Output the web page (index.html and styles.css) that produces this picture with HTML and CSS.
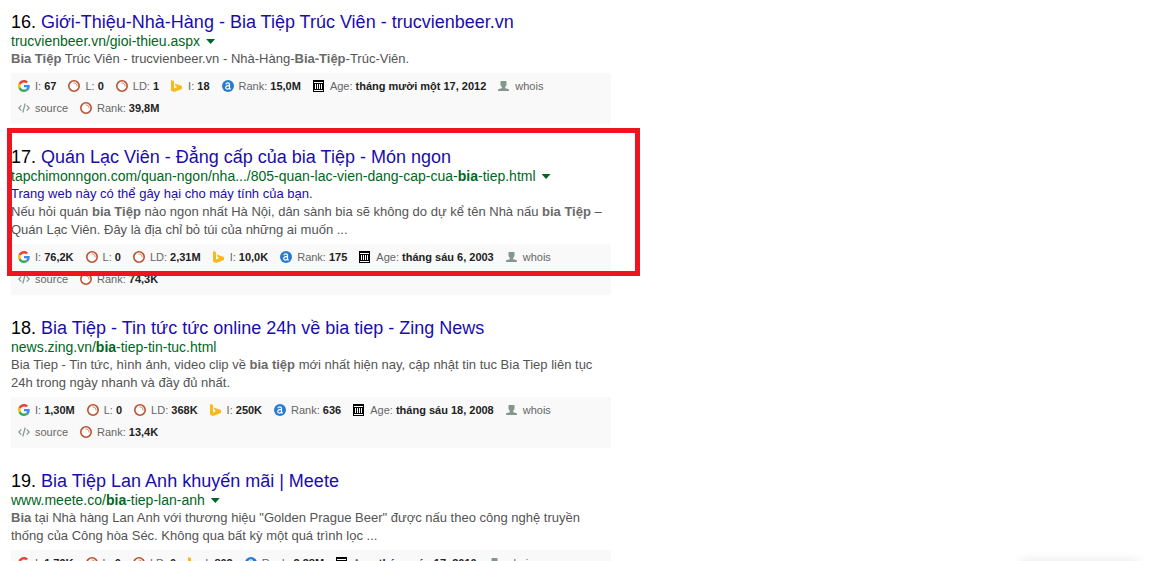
FILE: index.html
```html
<!DOCTYPE html>
<html lang="vi">
<head>
  <meta charset="UTF-8">
  <meta name="viewport" content="width=device-width, initial-scale=1.0">
  <title>bia tiệp</title>
  <link rel="stylesheet" href="styles.css">
</head>
<body>
  <!-- icons -->
  <svg class="sprite" width="0" height="0">
    <symbol id="google" viewBox="0 0 48 48">
      <path fill="#ea4335" d="M24 9.500c3.540 0 6.710 1.220 9.210 3.600l6.850-6.850C35.900 2.380 30.470 0 24 0 14.620 0 6.510 5.380 2.560 13.220l7.980 6.190C12.430 13.720 17.740 9.500 24 9.500z"/>
      <path fill="#4285f4" d="M46.980 24.550c0-1.570-.15-3.090-.38-4.550H24v9.020h12.940c-.58 2.960-2.260 5.480-4.780 7.180l7.730 6c4.510-4.180 7.090-10.360 7.090-17.650z"/>
      <path fill="#fbbc05" d="M10.530 28.590c-.48-1.450-.76-2.990-.76-4.590s.27-3.140.76-4.590l-7.980-6.190C.92 16.460 0 20.120 0 24s.92 7.540 2.560 10.780l7.970-6.190z"/>
      <path fill="#34a853" d="M24 48c6.480 0 11.930-2.130 15.890-5.810l-7.730-6c-2.150 1.450-4.920 2.300-8.160 2.300-6.260 0-11.570-4.220-13.470-9.910l-7.980 6.190C6.510 42.620 14.620 48 24 48z"/>
    </symbol>
    <symbol id="semrush" viewBox="0 0 12 12">
      <circle cx="6" cy="6" r="5.200" fill="#fff" stroke="#b95233" stroke-width="1.600"/>
      <path d="M5.500 3a3 3 0 0 1 3.500 3.500" fill="none" stroke="#d08a72" stroke-width="1"/>
    </symbol>
    <symbol id="bing" viewBox="0 0 12 12">
      <path fill="#f8b81e" d="M0 0l3 1v7.600L6.200 7 4.700 6.200 3.700 3.600 11 6v3L3 12 0 10.600z"/>
    </symbol>
    <symbol id="alexa" viewBox="0 0 12 12">
      <circle cx="6" cy="6" r="6" fill="#2a7bd0"/>
      <path d="M3.800 4.200C4.500 2.300 7.500 2.300 7.500 4.400v3.900c0 .8.800.8 1.300.4M7.500 5.400C5.400 5.500 3.700 6 3.700 7.600c0 2 3 1.900 3.800.1" fill="none" stroke="#fff" stroke-width="1.200"/>
    </symbol>
    <symbol id="archive" viewBox="0 0 12 12">
      <g shape-rendering="crispEdges">
        <path fill="#000" d="M0 0h11v12H0z"/>
        <path fill="#fff" d="M1 2h9v1H1zM2 4h1v5H2zM4 4h1v5H4zM6 4h1v5H6zM8 4h1v5H8zM1 10h9v1H1z"/>
      </g>
    </symbol>
    <symbol id="person" viewBox="0 0 12 12">
      <path fill="#84978d" d="M3.500 1h4c.7 0 1 .4 1 1v2.500c0 1-.5 1.800-1.300 2.300v1.400l3 .9c.6.200.8.700.8 1.900H0c0-1.200.2-1.700.8-1.900l3-.9V6.800C3 6.300 2.500 5.500 2.500 4.500V2c0-.6.300-1 1-1z"/>
    </symbol>
    <symbol id="code" viewBox="0 0 12 12">
      <path d="M3.300 3.300L.8 6l2.500 2.700M8.700 3.300L11.200 6 8.700 8.700M7.200 1.500L4.800 10.500" fill="none" stroke="#84978d" stroke-width="1.200"/>
    </symbol>
  </svg>

  <main class="results">
    <article class="result">
      <h3 class="title">16. <a href="#">Giới-Thiệu-Nhà-Hàng - Bia Tiệp Trúc Viên - trucvienbeer.vn</a></h3>
      <div class="url"><cite>trucvienbeer.vn/gioi-thieu.aspx</cite><button class="arrow" aria-label="Menu"></button></div>
      <p class="desc"><b>Bia Tiệp</b> Trúc Viên - trucvienbeer.vn - Nhà-Hàng-<b>Bia-Tiệp</b>-Trúc-Viên.</p>
      <div class="seobar">
        <a href="#"><svg><use href="#google"/></svg>I: <b>67</b></a>
        <a href="#"><svg><use href="#semrush"/></svg>L: <b>0</b></a>
        <a href="#"><svg><use href="#semrush"/></svg>LD: <b>1</b></a>
        <a href="#"><svg><use href="#bing"/></svg>I: <b>18</b></a>
        <a href="#"><svg><use href="#alexa"/></svg>Rank: <b>15,0M</b></a>
        <a href="#"><svg><use href="#archive"/></svg>Age: <b>tháng mười một 17, 2012</b></a>
        <a href="#"><svg><use href="#person"/></svg>whois</a>
        <a href="#"><svg><use href="#code"/></svg>source</a>
        <a href="#"><svg><use href="#semrush"/></svg>Rank: <b>39,8M</b></a>
      </div>
    </article>

    <article class="result marked">
      <h3 class="title">17. <a href="#">Quán Lạc Viên - Đẳng cấp của bia Tiệp - Món ngon</a></h3>
      <div class="url"><cite>tapchimonngon.com/quan-ngon/nha.../805-quan-lac-vien-dang-cap-cua-<b>bia</b>-tiep.html</cite><button class="arrow" aria-label="Menu"></button></div>
      <a class="warning" href="#">Trang web này có thể gây hại cho máy tính của bạn.</a>
      <p class="desc">Nếu hỏi quán <b>bia Tiệp</b> nào ngon nhất Hà Nội, dân sành bia sẽ không do dự kể tên Nhà nấu <b>bia Tiệp</b> –<br>Quán Lạc Viên. Đây là địa chỉ bỏ túi của những ai muốn ...</p>
      <div class="seobar">
        <a href="#"><svg><use href="#google"/></svg>I: <b>76,2K</b></a>
        <a href="#"><svg><use href="#semrush"/></svg>L: <b>0</b></a>
        <a href="#"><svg><use href="#semrush"/></svg>LD: <b>2,31M</b></a>
        <a href="#"><svg><use href="#bing"/></svg>I: <b>10,0K</b></a>
        <a href="#"><svg><use href="#alexa"/></svg>Rank: <b>175</b></a>
        <a href="#"><svg><use href="#archive"/></svg>Age: <b>tháng sáu 6, 2003</b></a>
        <a href="#"><svg><use href="#person"/></svg>whois</a>
        <a href="#"><svg><use href="#code"/></svg>source</a>
        <a href="#"><svg><use href="#semrush"/></svg>Rank: <b>74,3K</b></a>
      </div>
    </article>

    <article class="result">
      <h3 class="title">18. <a href="#">Bia Tiệp - Tin tức tức online 24h về bia tiep - Zing News</a></h3>
      <div class="url"><cite>news.zing.vn/<b>bia</b>-tiep-tin-tuc.html</cite></div>
      <p class="desc">Bia Tiep - Tin tức, hình ảnh, video clip về <b>bia tiệp</b> mới nhất hiện nay, cập nhật tin tuc Bia Tiep liên tục<br>24h trong ngày nhanh và đầy đủ nhất.</p>
      <div class="seobar">
        <a href="#"><svg><use href="#google"/></svg>I: <b>1,30M</b></a>
        <a href="#"><svg><use href="#semrush"/></svg>L: <b>0</b></a>
        <a href="#"><svg><use href="#semrush"/></svg>LD: <b>368K</b></a>
        <a href="#"><svg><use href="#bing"/></svg>I: <b>250K</b></a>
        <a href="#"><svg><use href="#alexa"/></svg>Rank: <b>636</b></a>
        <a href="#"><svg><use href="#archive"/></svg>Age: <b>tháng sáu 18, 2008</b></a>
        <a href="#"><svg><use href="#person"/></svg>whois</a>
        <a href="#"><svg><use href="#code"/></svg>source</a>
        <a href="#"><svg><use href="#semrush"/></svg>Rank: <b>13,4K</b></a>
      </div>
    </article>

    <article class="result">
      <h3 class="title">19. <a href="#">Bia Tiệp Lan Anh khuyến mãi | Meete</a></h3>
      <div class="url"><cite>www.meete.co/<b>bia</b>-tiep-lan-anh</cite><button class="arrow" aria-label="Menu"></button></div>
      <p class="desc"><b>Bia</b> tại Nhà hàng Lan Anh với thương hiệu "Golden Prague Beer" được nấu theo công nghệ truyền<br>thống của Công hòa Séc. Không qua bất kỳ một quá trình lọc ...</p>
      <div class="seobar">
        <a href="#"><svg><use href="#google"/></svg>I: <b>1,79K</b></a>
        <a href="#"><svg><use href="#semrush"/></svg>L: <b>0</b></a>
        <a href="#"><svg><use href="#semrush"/></svg>LD: <b>0</b></a>
        <a href="#"><svg><use href="#bing"/></svg>I: <b>802</b></a>
        <a href="#"><svg><use href="#alexa"/></svg>Rank: <b>2,38M</b></a>
        <a href="#"><svg><use href="#archive"/></svg>Age: <b>tháng sáu 17, 2010</b></a>
        <a href="#"><svg><use href="#person"/></svg>whois</a>
      </div>
    </article>
  </main>
  <div class="popup"></div>
</body>
</html>
```
FILE: styles.css
```css
body {
  margin: 0;
  padding: 11px 11px 0;
  height: 100vh;
  box-sizing: border-box;
  overflow: hidden;
  background-color: #fff;
  color: #545454;
  font-family: "Liberation Sans", Arial, sans-serif;
  font-size: 13px;
}
a {
  color: #1a0dab;
  text-decoration: none;
}
.sprite {
  position: absolute;
}
.results {
  max-width: 600px;
}
.result {
  position: relative;
  margin-bottom: 22px;
}
/* red frame round the flagged result */
.marked::after {
  content: "";
  position: absolute;
  top: -18px;
  right: -29px;
  bottom: 19px;
  left: -4px;
  border: 5px solid #f0141e;
  pointer-events: none;
}
.title {
  margin: 0;
  font-size: 18px;
  font-weight: normal;
  line-height: 22px;
  color: #000;
  white-space: nowrap;
}
.url {
  display: flex;
  align-items: center;
  gap: 6px;
  font-size: 14px;
  line-height: 17px;
  color: #006621;
  white-space: nowrap;
}
.url cite {
  font-style: normal;
}
.arrow {
  width: 9px;
  height: 5px;
  padding: 0;
  border: 0;
  background-color: #006621;
  clip-path: polygon(0 0, 100% 0, 50% 100%);
  cursor: pointer;
}
.warning {
  display: block;
  line-height: 18px;
}
.desc {
  margin: 0;
  line-height: 18px;
  white-space: nowrap;
}
.desc b {
  color: #6a6a6a;
}
.seobar {
  display: flex;
  flex-wrap: wrap;
  column-gap: 12px;
  margin-top: 5px;
  padding: 2px 7px 5px;
  background-color: #f9f9f9;
  font-size: 11px;
  line-height: 22px;
}
.seobar a {
  display: flex;
  align-items: center;
  color: #666;
  white-space: pre;
}
.seobar b {
  color: #222;
}
.seobar svg {
  width: 12px;
  height: 12px;
  margin-right: 5px;
}
/* top shadow of the panel that waits below the window */
.popup {
  position: fixed;
  right: 20px;
  bottom: -41px;
  width: 116px;
  height: 40px;
  box-shadow: 0 0 12px rgba(0, 0, 0, 0.12);
}
```
